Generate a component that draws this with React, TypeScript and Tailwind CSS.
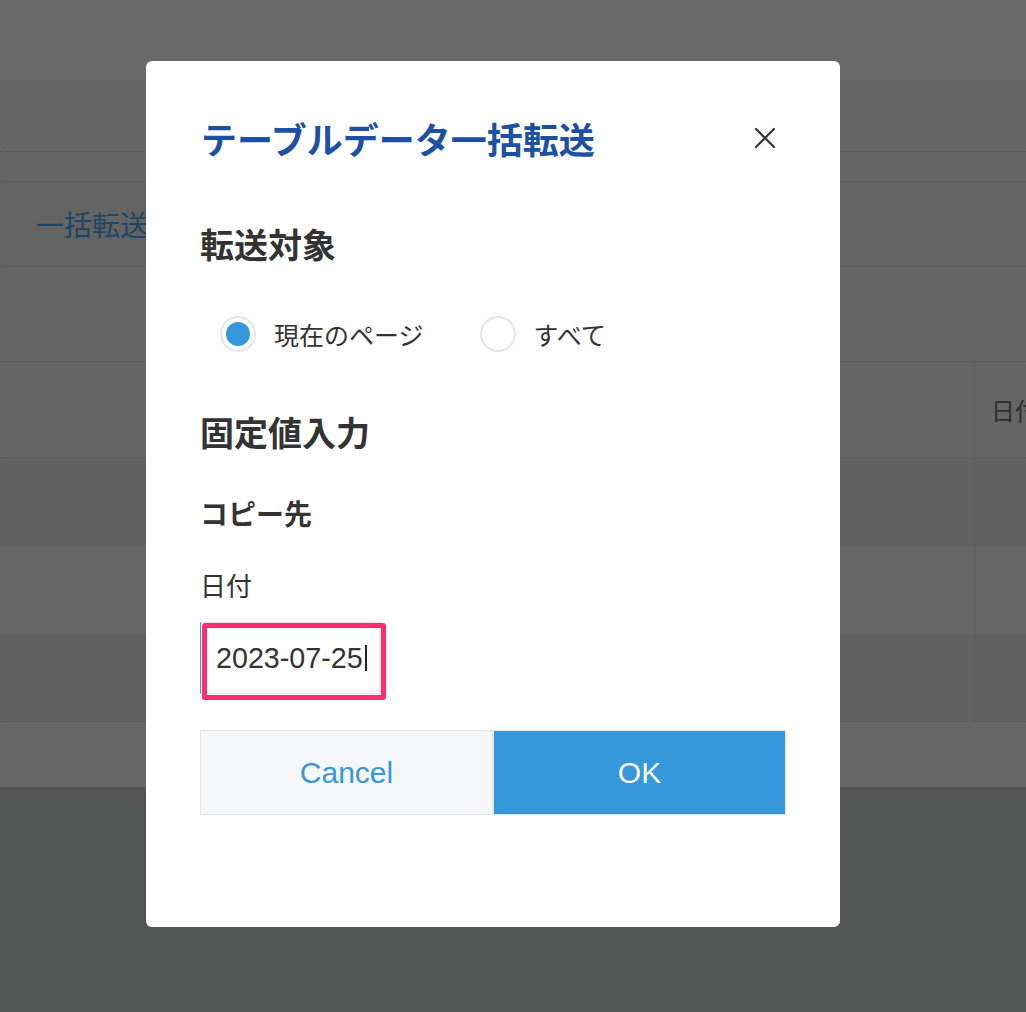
import React from "react";

const jp = { fontFamily: '"Noto Sans CJK JP", "Noto Sans", sans-serif' };
const latin = { fontFamily: '"Liberation Sans", Arial, sans-serif' };

function Radio({ checked, label }: { checked: boolean; label: string }) {
  return (
    <div className="flex items-center">
      <div className="w-[36px] h-[36px] rounded-full border-2 border-[#e1e8ee] flex items-center justify-center">
        {checked && <div className="w-[24px] h-[24px] rounded-full bg-[#3498db]" />}
      </div>
      <span className="ml-[18px] text-[25px] leading-[36px] text-[#333333]">{label}</span>
    </div>
  );
}

export default function App() {
  return (
    <div className="relative w-[1026px] h-[1012px] overflow-hidden bg-[#545655]" style={jp}>
      {/* dimmed page behind */}
      <div className="h-[80px] bg-[#686868]" />
      <div className="h-[72px] bg-[#656565] border-b border-dotted border-[#555555]" />
      <div className="h-[30px] bg-[#656565] border-b border-dotted border-[#555555]" />
      <div className="h-[85px] bg-[#646464] border-b border-dotted border-[#555555] flex items-center pl-[36px]">
        <span className="text-[28px] leading-[34px] text-[#1f4666]">一括転送</span>
      </div>
      <div className="h-[95px] bg-[#656565] border-b border-dotted border-[#555555]" />
      <div className="h-[96px] bg-[#656565] border-b border-dotted border-[#555555] flex">
        <div className="w-[974px] shrink-0" />
        <div className="flex-1 min-w-0 overflow-hidden border-l border-dotted border-[#555555] flex items-center pl-[16px]">
          <span className="text-[24px] leading-[30px] text-[#2e2e2e] whitespace-nowrap">日付</span>
        </div>
      </div>
      <div className="h-[88px] bg-[#616161] flex">
        <div className="w-[974px] shrink-0" />
        <div className="flex-1 border-l border-dotted border-[#555555]" />
      </div>
      <div className="h-[88px] bg-[#666666] flex">
        <div className="w-[974px] shrink-0" />
        <div className="flex-1 border-l border-dotted border-[#555555]" />
      </div>
      <div className="h-[88px] bg-[#616161] border-b border-dotted border-[#555555] flex">
        <div className="w-[974px] shrink-0" />
        <div className="flex-1 border-l border-dotted border-[#555555]" />
      </div>
      <div className="h-[65px] bg-[#666666]" />

      {/* modal */}
      <div className="absolute left-[146px] top-[61px] w-[694px] h-[866px] bg-white rounded-[6px] px-[54px] pt-[55px] flex flex-col">
        <div className="flex items-center justify-between h-[44px]">
          <h1 className="text-[36px] leading-[44px] font-bold text-[#1d4fa3] ml-[1px]">テーブルデータ一括転送</h1>
          <svg width="22" height="22" viewBox="0 0 22 22" className="mr-[10px]">
            <path d="M2 2 L20 20 M20 2 L2 20" stroke="#333333" strokeWidth="2.2" strokeLinecap="round" />
          </svg>
        </div>

        <h2 className="mt-[64px] text-[34px] leading-[40px] font-bold text-[#333333]">転送対象</h2>

        <div className="mt-[52px] flex items-center pl-[20px]">
          <Radio checked label="現在のページ" />
          <div className="ml-[56px]">
            <Radio checked={false} label="すべて" />
          </div>
        </div>

        <h2 className="mt-[60px] text-[34px] leading-[40px] font-bold text-[#333333]">固定値入力</h2>

        <h3 className="mt-[44px] text-[28px] leading-[34px] font-bold text-[#333333]">コピー先</h3>

        <div className="mt-[39px] text-[26px] leading-[32px] text-[#333333]">日付</div>

        <div className="mt-[21px] relative w-[186px] h-[78px]">
          <div className="w-[181px] h-[72px] border border-[#e3e7e8] border-l-[#3498db] bg-white shadow-[inset_0_2px_3px_rgba(0,0,0,0.08)] flex items-center pl-[15px]">
            <span className="text-[28.7px] leading-[32px] text-[#333333]" style={latin}>2023-07-25</span>
            <span className="ml-[2px] w-[2px] h-[26px] bg-[#222222]" />
          </div>
          <div className="absolute left-[2px] top-[1px] w-[184px] h-[77px] border-[5px] border-[#ff2d6f] rounded-[3px]" />
        </div>

        <div className="mt-[30px] flex h-[85px]" style={latin}>
          <button className="flex-1 bg-[#f5f7f8] border border-[#e3e7e8] text-[#3498db] text-[30px]">Cancel</button>
          <button className="flex-1 bg-[#3498db] border border-[#e3e7e8] text-white text-[30px]">OK</button>
        </div>
      </div>
    </div>
  );
}
